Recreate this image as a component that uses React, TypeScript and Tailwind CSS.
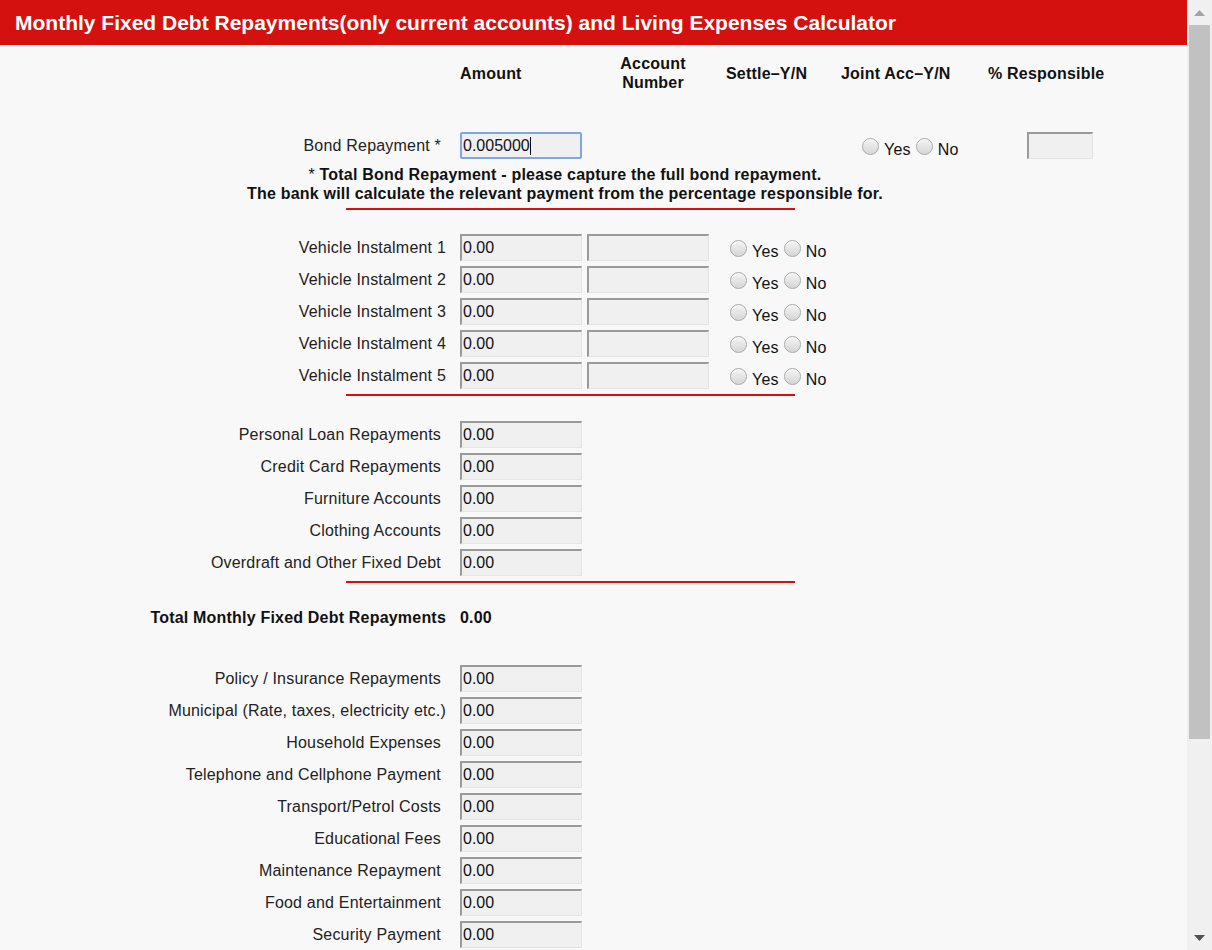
import React from "react";

const FONT = { fontFamily: '"Liberation Sans", Arial, sans-serif' };

function Box({ value = "", w = "w-[122px]" }: { value?: string; w?: string }) {
  return (
    <div
      className={`${w} h-[27px] shrink-0 bg-[#f0f0f0] border-t-2 border-l-2 border-r border-b border-t-[#9a9a9a] border-l-[#9a9a9a] border-r-[#e4e4e4] border-b-[#e4e4e4] pl-[1px] text-[16px] leading-[23px] text-[#111] whitespace-nowrap overflow-hidden`}
    >
      {value}
    </div>
  );
}

function Radio() {
  return (
    <span className="mt-[6px] w-[17px] h-[17px] shrink-0 rounded-full border border-[#a8a8a8] bg-gradient-to-b from-[#f4f4f4] to-[#d6d6d6] shadow-[inset_0_1px_1px_rgba(255,255,255,0.9)]" />
  );
}

function YesNo() {
  return (
    <div className="flex items-start h-[27px] text-[16px] tracking-[0.2px] text-[#111]">
      <Radio />
      <span className="ml-[5px] mt-[8px] leading-[19px]">Yes</span>
      <span className="ml-[5px] flex">
        <Radio />
      </span>
      <span className="ml-[5px] mt-[8px] leading-[19px]">No</span>
    </div>
  );
}

function RedLine({ mt }: { mt: string }) {
  return <div className={`${mt} ml-[346px] w-[449px] h-[2px] bg-[#d4110f]`} />;
}

function SimpleRow({ label, end = 441 }: { label: string; end?: number }) {
  return (
    <div className="flex items-center h-[27px] mb-[5px]">
      <div
        className={`${end === 446 ? "w-[446px] mr-[14px]" : "w-[441px] mr-[19px]"} text-right text-[16px] tracking-[0.2px] text-[#222] whitespace-nowrap`}
      >
        {label}
      </div>
      <Box value="0.00" />
    </div>
  );
}

function VehicleRow({ n }: { n: number }) {
  return (
    <div className="flex items-center h-[27px] mb-[5px]">
      <div className="w-[446px] mr-[14px] text-right text-[16px] tracking-[0.2px] text-[#222] whitespace-nowrap">
        Vehicle Instalment {n}
      </div>
      <Box value="0.00" />
      <div className="ml-[5px]">
        <Box />
      </div>
      <div className="ml-[21px] self-start">
        <YesNo />
      </div>
    </div>
  );
}

export default function App() {
  return (
    <div className="w-[1212px] h-[950px] overflow-hidden flex bg-[#f8f8f8]" style={FONT}>
      <div className="w-[1187px] shrink-0 h-full overflow-hidden">
        {/* Title bar */}
        <div className="h-[45px] bg-[#d4110f] flex items-center pl-[15px]">
          <h1 className="text-white font-bold text-[21px] leading-[24px] whitespace-nowrap">
            Monthly Fixed Debt Repayments(only current accounts) and Living Expenses Calculator
          </h1>
        </div>

        {/* Column headers */}
        <div className="mt-[9px] h-[38px] flex items-center font-bold text-[16px] leading-[19px] tracking-[0.2px] text-[#111] whitespace-nowrap">
          <div className="w-[460px] shrink-0" />
          <div className="w-[143px] shrink-0">Amount</div>
          <div className="w-[100px] shrink-0 text-center">
            Account
            <br />
            Number
          </div>
          <div className="w-[23px] shrink-0" />
          <div className="w-[115px] shrink-0">Settle–Y/N</div>
          <div className="w-[147px] shrink-0">Joint Acc–Y/N</div>
          <div>% Responsible</div>
        </div>

        {/* Bond row */}
        <div className="mt-[40px] flex items-start h-[27px]">
          <div className="w-[441px] mr-[19px] h-[27px] flex items-center justify-end text-[16px] tracking-[0.2px] text-[#222] whitespace-nowrap">
            Bond Repayment *
          </div>
          <div className="w-[122px] h-[27px] shrink-0 rounded-[2px] border-2 border-[#7ea7e6] bg-[#f0f0f0] pl-[1px] text-[16px] leading-[23px] text-[#111] flex items-center">
            <span>0.005000</span>
            <span className="w-px h-[18px] bg-black" />
          </div>
          <div className="ml-[280px]">
            <YesNo />
          </div>
          <div className="ml-[68px]">
            <Box w="w-[66px]" />
          </div>
        </div>

        {/* Note */}
        <div className="mt-[6px] ml-[200px] w-[730px] text-center text-[16px] leading-[19px] tracking-[0.2px] text-[#111]">
          <div>
            * <span className="font-bold">Total Bond Repayment - please capture the full bond repayment.</span>
          </div>
          <div className="font-bold">
            The bank will calculate the relevant payment from the percentage responsible for.
          </div>
        </div>

        <RedLine mt="mt-[5px]" />

        {/* Vehicles */}
        <div className="mt-[24px]">
          {[1, 2, 3, 4, 5].map((n) => (
            <VehicleRow key={n} n={n} />
          ))}
        </div>

        <RedLine mt="mt-[1px]" />

        {/* Other fixed debt */}
        <div className="mt-[25px]">
          <SimpleRow label="Personal Loan Repayments" />
          <SimpleRow label="Credit Card Repayments" />
          <SimpleRow label="Furniture Accounts" />
          <SimpleRow label="Clothing Accounts" />
          <SimpleRow label="Overdraft and Other Fixed Debt" />
        </div>

        <RedLine mt="mt-0" />

        {/* Total */}
        <div className="mt-[25px] flex items-center h-[19px] font-bold text-[16px] leading-[19px] tracking-[0.2px] text-[#111]">
          <div className="w-[446px] mr-[14px] text-right whitespace-nowrap">
            Total Monthly Fixed Debt Repayments
          </div>
          <div>0.00</div>
        </div>

        {/* Living expenses */}
        <div className="mt-[38px]">
          <SimpleRow label="Policy / Insurance Repayments" />
          <SimpleRow label="Municipal (Rate, taxes, electricity etc.)" end={446} />
          <SimpleRow label="Household Expenses" />
          <SimpleRow label="Telephone and Cellphone Payment" />
          <SimpleRow label="Transport/Petrol Costs" />
          <SimpleRow label="Educational Fees" />
          <SimpleRow label="Maintenance Repayment" />
          <SimpleRow label="Food and Entertainment" />
          <SimpleRow label="Security Payment" />
        </div>
      </div>

      {/* Scrollbar */}
      <div className="w-[25px] shrink-0 h-full bg-[#f0f0f0] flex flex-col items-center">
        <div className="h-[25px] w-full flex items-center justify-center">
          <svg width="11" height="6" viewBox="0 0 11 6">
            <polygon points="0,6 5.5,0 11,6" fill="#a3a3a3" />
          </svg>
        </div>
        <div className="w-[21px] h-[714px] bg-[#c1c1c1] ml-[2px] mr-[2px]" />
        <div className="flex-1" />
        <div className="h-[25px] w-full flex items-center justify-center">
          <svg width="11" height="6" viewBox="0 0 11 6">
            <polygon points="0,0 11,0 5.5,6" fill="#505050" />
          </svg>
        </div>
      </div>
    </div>
  );
}
